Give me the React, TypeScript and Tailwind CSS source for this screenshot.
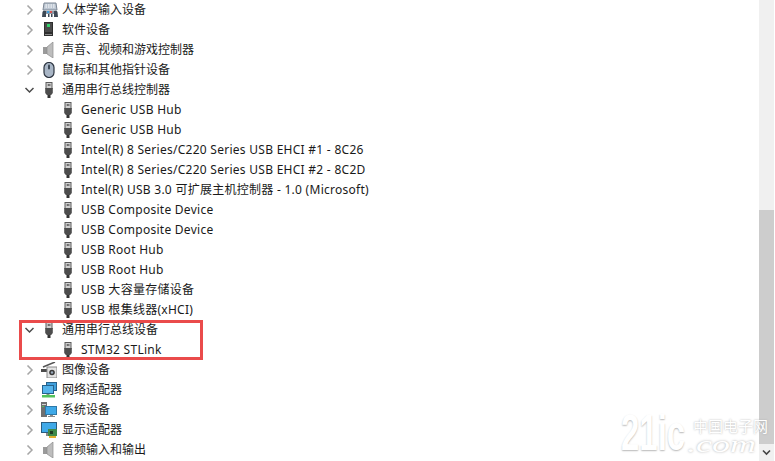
const F = "font-['Noto_Sans','Noto_Sans_CJK_SC',sans-serif]";

function Chevron({ open }: { open: boolean }) {
  return (
    <svg width="10" height="10" viewBox="0 0 10 10" className="shrink-0">
      {open ? (
        <path d="M1.5 3 L5.5 7 L9.5 3" fill="none" stroke="#4a4a4a" strokeWidth="1.5" />
      ) : (
        <path d="M3.5 0.5 L8 5 L3.5 9.5" fill="none" stroke="#a6a6a6" strokeWidth="1.5" />
      )}
    </svg>
  );
}

function Usb() {
  return (
    <svg width="16" height="16" viewBox="0 0 16 16">
      <rect x="5" y="0.5" width="6" height="6" fill="#cfcfcf" stroke="#5c5c5c" />
      <rect x="6.8" y="2" width="0.9" height="2" fill="#444" />
      <rect x="8.4" y="2" width="0.9" height="2" fill="#444" />
      <path d="M4.2 6 H11.8 V11 L10.2 13 H5.8 L4.2 11 Z" fill="#4d4d4d" />
      <rect x="6.5" y="13" width="3" height="3" fill="#333" />
    </svg>
  );
}

function Hid() {
  return (
    <svg width="18" height="16" viewBox="0 0 18 16">
      <path d="M3 1 H15 L16 8 H2 Z" fill="#bcc6d2" stroke="#7d8794" />
      <path d="M4.5 3 H13.5 M4.5 5 H13.5" stroke="#fff" strokeWidth="1" strokeDasharray="1.5 1" />
      <path d="M1 15 L1.5 10 Q2 8 5 9 V15 Z" fill="#3e4854" />
      <path d="M13 15 V9 Q16 8 16.5 10 L17 15 Z" fill="#3e4854" />
      <rect x="5" y="9" width="8" height="3" fill="#8a97a6" />
      <rect x="6" y="9" width="2" height="2" fill="#3f9fdc" />
      <rect x="9" y="9" width="2" height="2" fill="#d9534f" />
      <rect x="7" y="12" width="1.5" height="3" fill="#3e4854" />
      <rect x="10" y="12" width="1.5" height="3" fill="#3e4854" />
    </svg>
  );
}

function Software() {
  return (
    <svg width="16" height="16" viewBox="0 0 16 16">
      <rect x="3" y="0" width="9" height="14" fill="#2e2e2e" />
      <rect x="4" y="1" width="7" height="9" fill="#4a4a4a" />
      <rect x="6" y="2" width="3" height="3" fill="#35d06a" />
      <rect x="4" y="12" width="7" height="1" fill="#8a8a8a" />
    </svg>
  );
}

function Speaker() {
  return (
    <svg width="16" height="16" viewBox="0 0 16 16">
      <rect x="2" y="5" width="4" height="7" fill="#9a9a9a" />
      <path d="M6 5 L12 0 V16 L6 12 Z" fill="#bdbdbd" stroke="#8c8c8c" strokeWidth="0.7" />
    </svg>
  );
}

function Mouse() {
  return (
    <svg width="16" height="16" viewBox="0 0 16 16">
      <rect x="3" y="0.5" width="10" height="15" rx="5" fill="#a9b6c6" stroke="#2c3440" strokeWidth="1.2" />
      <rect x="7" y="2.5" width="2" height="5" rx="1" fill="#3e4a58" />
    </svg>
  );
}

function Camera() {
  return (
    <svg width="16" height="16" viewBox="0 0 16 16">
      <path d="M2 5 L14 0" stroke="#555" strokeWidth="1.5" />
      <rect x="0" y="7" width="6" height="3" fill="#4a4a4a" />
      <rect x="6" y="5" width="10" height="11" fill="#e2e2e2" stroke="#8a8a8a" />
      <circle cx="11" cy="10.5" r="2.8" fill="#3a3a3a" />
      <circle cx="11" cy="10.5" r="1.2" fill="#9ab" />
    </svg>
  );
}

function Network() {
  return (
    <svg width="16" height="16" viewBox="0 0 16 16">
      <rect x="5.5" y="0.5" width="10" height="8" fill="#3f9fdc" stroke="#27628c" />
      <rect x="1.5" y="3.5" width="11" height="8" fill="#55b4ec" stroke="#27628c" />
      <rect x="5.5" y="12" width="3" height="1" fill="#7a9a7a" />
      <rect x="1" y="13" width="13" height="2.5" fill="#52c25a" />
    </svg>
  );
}

function System() {
  return (
    <svg width="16" height="16" viewBox="0 0 16 16">
      <rect x="0" y="0" width="6" height="15" fill="#6f6f6f" />
      <rect x="1" y="2" width="4" height="1" fill="#d5d5d5" />
      <rect x="1" y="4" width="2" height="1" fill="#52c25a" />
      <rect x="4.5" y="4.5" width="11" height="8" fill="#3fa9e8" stroke="#2d79a8" />
      <rect x="9" y="13" width="3" height="1" fill="#8a8a8a" />
      <rect x="7" y="14" width="7" height="1" fill="#8a8a8a" />
    </svg>
  );
}

function Display() {
  return (
    <svg width="17" height="16" viewBox="0 0 17 16">
      <rect x="0.5" y="0.5" width="15" height="10" fill="#3fa9e8" stroke="#2a5c80" />
      <rect x="5" y="11" width="3" height="3" fill="#8a8a8a" />
      <rect x="7" y="7" width="9" height="7" fill="#3f8a4a" />
      <rect x="9" y="9" width="3" height="3" fill="#1f3d24" />
      <rect x="8" y="14" width="7" height="2" fill="#e0b030" />
    </svg>
  );
}

type Row = { label: string; icon?: React.ReactNode; state?: "open" | "closed" };

const rows: Row[] = [
  { label: "人体学输入设备", icon: <Hid />, state: "closed" },
  { label: "软件设备", icon: <Software />, state: "closed" },
  { label: "声音、视频和游戏控制器", icon: <Speaker />, state: "closed" },
  { label: "鼠标和其他指针设备", icon: <Mouse />, state: "closed" },
  { label: "通用串行总线控制器", icon: <Usb />, state: "open" },
  { label: "Generic USB Hub" },
  { label: "Generic USB Hub" },
  { label: "Intel(R) 8 Series/C220 Series USB EHCI #1 - 8C26" },
  { label: "Intel(R) 8 Series/C220 Series USB EHCI #2 - 8C2D" },
  { label: "Intel(R) USB 3.0 可扩展主机控制器 - 1.0 (Microsoft)" },
  { label: "USB Composite Device" },
  { label: "USB Composite Device" },
  { label: "USB Root Hub" },
  { label: "USB Root Hub" },
  { label: "USB 大容量存储设备" },
  { label: "USB 根集线器(xHCI)" },
  { label: "通用串行总线设备", icon: <Usb />, state: "open" },
  { label: "STM32 STLink" },
  { label: "图像设备", icon: <Camera />, state: "closed" },
  { label: "网络适配器", icon: <Network />, state: "closed" },
  { label: "系统设备", icon: <System />, state: "closed" },
  { label: "显示适配器", icon: <Display />, state: "closed" },
  { label: "音频输入和输出", icon: <Speaker />, state: "closed" },
];

function TreeRow({ row }: { row: Row }) {
  if (!row.state) {
    return (
      <div className="flex h-5 items-center pl-[60px]">
        <div className="flex w-[21px] shrink-0 justify-start">
          <Usb />
        </div>
        <span className="whitespace-nowrap text-xs tracking-[0.27px] text-[#1a1a1a]">{row.label}</span>
      </div>
    );
  }
  return (
    <div className="flex h-5 items-center pl-6">
      <Chevron open={row.state === "open"} />
      <div className="ml-[7px] flex w-[21px] shrink-0 justify-start">{row.icon}</div>
      <span className="whitespace-nowrap text-xs text-[#1a1a1a]">{row.label}</span>
    </div>
  );
}

export default function App() {
  return (
    <div className={`relative flex h-[461px] w-[775px] overflow-hidden bg-white ${F}`}>
      <div className="min-w-0 flex-1">
        {rows.map((r, i) => (
          <TreeRow key={i} row={r} />
        ))}
      </div>

      <div className="mr-px flex w-[15px] shrink-0 flex-col bg-[#f0f0f0]">
        <div className="h-[210px]" />
        <div className="h-[234px] bg-[#cdcdcd]" />
        <div className="flex flex-1 items-center justify-center">
          <svg width="9" height="7" viewBox="0 0 9 7">
            <path d="M1 1.5 L4.5 5 L8 1.5" fill="none" stroke="#444" strokeWidth="1.6" />
          </svg>
        </div>
      </div>

      {/* Red highlight annotation */}
      <div className="absolute left-[19px] top-[320px] h-[40px] w-[184px] border-[3px] border-[#ea4b4b]" />

      {/* Watermark */}
      <div className="pointer-events-none absolute left-[621px] top-[408px] h-[50px] w-[150px]">
        <span className="absolute left-0 top-0 origin-left scale-x-[0.66] font-['Liberation_Sans'] text-[50px] font-bold leading-[50px] text-white [text-shadow:0_1px_2px_#b8b8b8]">
          21ic
        </span>
        <span className="absolute left-[72px] top-[9px] whitespace-nowrap font-['Noto_Sans_CJK_SC'] text-[15px] leading-[18px] text-white [text-shadow:0_0_2px_#a8a8a8]">
          中国电子网
        </span>
        <span className="absolute left-[66px] top-[28px] origin-left scale-x-[1.5] font-['Liberation_Serif'] text-[24px] italic leading-[16px] text-white [text-shadow:0_0_2px_#a8a8a8]">
          .com
        </span>
      </div>
    </div>
  );
}
